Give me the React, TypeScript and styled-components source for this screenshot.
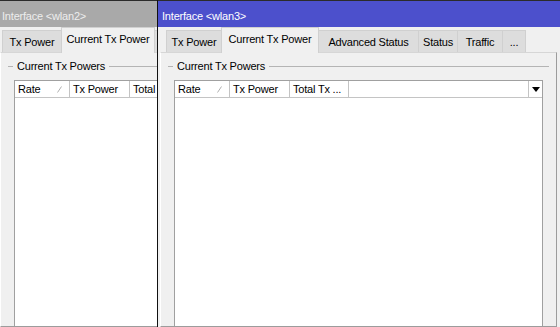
import React from "react";
import styled, { createGlobalStyle } from "styled-components";

const Global = createGlobalStyle`
  html, body {
    margin: 0;
    padding: 0;
  }
  body {
    background: #f0f0f0;
    font-family: "Liberation Sans", Arial, sans-serif;
    font-size: 11px;
    letter-spacing: -0.2px;
    color: #000;
  }
`;

const Desktop = styled.div`
  display: flex;
  width: 560px;
  height: 327px;
  overflow: hidden;
  background: #f0f0f0;
`;

const Clip = styled.div`
  flex: none;
  width: 157px;
  overflow: hidden;
`;

const Window = styled.div<{ $shift?: number; $width: number }>`
  flex: none;
  box-sizing: border-box;
  width: ${(p) => p.$width}px;
  height: 327px;
  margin-left: ${(p) => p.$shift || 0}px;
  border-left: 1px solid #111;
  background: #f0f0f0;
  display: flex;
  flex-direction: column;
  overflow: hidden;
`;

const TitleBar = styled.div<{ $active?: boolean }>`
  flex: none;
  box-sizing: border-box;
  height: 27px;
  border-top: 1px solid #2b2b2b;
  padding: 8px 4px 0;
  line-height: 14px;
  white-space: nowrap;
  background: ${(p) => (p.$active ? "#4c50cc" : "#a9a9a9")};
  color: ${(p) => (p.$active ? "#ffffff" : "#ededed")};
`;

const TabRow = styled.div<{ $inset: number }>`
  flex: none;
  display: flex;
  align-items: flex-start;
  height: 25px;
  padding-left: ${(p) => p.$inset}px;
  position: relative;
  z-index: 1;
`;

const Tab = styled.div<{ $active?: boolean; $w: number }>`
  flex: none;
  box-sizing: border-box;
  width: ${(p) => p.$w}px;
  height: ${(p) => (p.$active ? 26 : 22)}px;
  margin-top: ${(p) => (p.$active ? 0 : 3)}px;
  margin-right: -1px;
  padding-top: 4px;
  line-height: 14px;
  text-align: center;
  white-space: nowrap;
  border: 1px solid #d0d0d0;
  border-bottom: none;
  background: ${(p) => (p.$active ? "#f0f0f0" : "#dddddd")};
  position: relative;
  z-index: ${(p) => (p.$active ? 2 : 1)};
`;

const Panel = styled.div`
  flex: 1;
  min-height: 0;
  margin: 0 3px 0 2px;
  border: 1px solid;
  border-color: #d6d6d6 #9c9c9c #9c9c9c #ffffff;
  background: #f0f0f0;
  padding: 6px 7px 0;
  display: flex;
  flex-direction: column;
`;

const GroupLabel = styled.div`
  display: flex;
  align-items: center;
  height: 14px;
  line-height: 14px;
  white-space: nowrap;
`;

const Rule = styled.span<{ $grow?: boolean }>`
  display: block;
  height: 1px;
  background: #b4b4b4;
  width: ${(p) => (p.$grow ? "auto" : "5px")};
  flex: ${(p) => (p.$grow ? 1 : "none")};
`;

const LabelText = styled.span`
  padding: 0 4px;
`;

const List = styled.div`
  flex: 1;
  margin: 7px 6px 0;
  border: 1px solid #a0a0a0;
  border-bottom: none;
  background: #ffffff;
  min-width: 0;
`;

const Header = styled.div`
  display: flex;
  height: 16px;
  border-bottom: 1px solid #c4c4c4;
  line-height: 16px;
  white-space: nowrap;
`;

const Col = styled.div<{ $w?: number }>`
  box-sizing: border-box;
  flex: ${(p) => (p.$w ? "none" : 1)};
  width: ${(p) => (p.$w ? `${p.$w}px` : "auto")};
  padding: 0 3px;
  border-right: ${(p) => (p.$w ? "1px solid #c4c4c4" : "none")};
  display: flex;
  justify-content: space-between;
  align-items: center;
  overflow: hidden;
`;

const SortMark = styled.svg`
  margin-right: 4px;
`;

const DropButton = styled.div`
  flex: none;
  box-sizing: border-box;
  width: 14px;
  border-left: 1px solid #c4c4c4;
  display: flex;
  align-items: center;
  justify-content: center;
`;

type TabDef = { label: string; w: number; active?: boolean };

const TxWindow = ({
  title,
  active,
  tabs,
  inset,
  width,
  shift,
}: {
  title: string;
  active?: boolean;
  tabs: TabDef[];
  inset: number;
  width: number;
  shift?: number;
}) => (
  <Window $width={width} $shift={shift}>
    <TitleBar $active={active}>{title}</TitleBar>
    <TabRow $inset={inset}>
      {tabs.map((t) => (
        <Tab key={t.label} $w={t.w} $active={t.active}>
          {t.label}
        </Tab>
      ))}
    </TabRow>
    <Panel>
      <GroupLabel>
        <Rule />
        <LabelText>Current Tx Powers</LabelText>
        <Rule $grow />
      </GroupLabel>
      <List>
        <Header>
          <Col $w={55}>
            <span>Rate</span>
            <SortMark width="5" height="7" viewBox="0 0 5 7">
              <path d="M0.5 6.5 L4.5 0.5" stroke="#b0b0b0" strokeWidth="1" fill="none" />
            </SortMark>
          </Col>
          <Col $w={60}>Tx Power</Col>
          <Col $w={59}>Total Tx ...</Col>
          <Col />
          <DropButton>
            <svg width="8" height="5" viewBox="0 0 8 5">
              <path d="M0 0 H8 L4 5 Z" fill="#000" />
            </svg>
          </DropButton>
        </Header>
      </List>
    </Panel>
  </Window>
);

export default function App() {
  return (
    <>
      <Global />
      <Desktop>
        <Clip>
          <TxWindow
            title="Interface <wlan2>"
            width={403}
            shift={-3}
            inset={4}
            tabs={[
              { label: "Tx Power", w: 60 },
              { label: "Current Tx Power", w: 94, active: true },
              { label: "Advanced Status", w: 100 },
              { label: "Status", w: 40 },
            ]}
          />
        </Clip>
        <TxWindow
          title="Interface <wlan3>"
          active
          width={403}
          inset={8}
          tabs={[
            { label: "Tx Power", w: 56 },
            { label: "Current Tx Power", w: 98, active: true },
            { label: "Advanced Status", w: 101 },
            { label: "Status", w: 40 },
            { label: "Traffic", w: 46 },
            { label: "...", w: 24 },
          ]}
        />
      </Desktop>
    </>
  );
}
